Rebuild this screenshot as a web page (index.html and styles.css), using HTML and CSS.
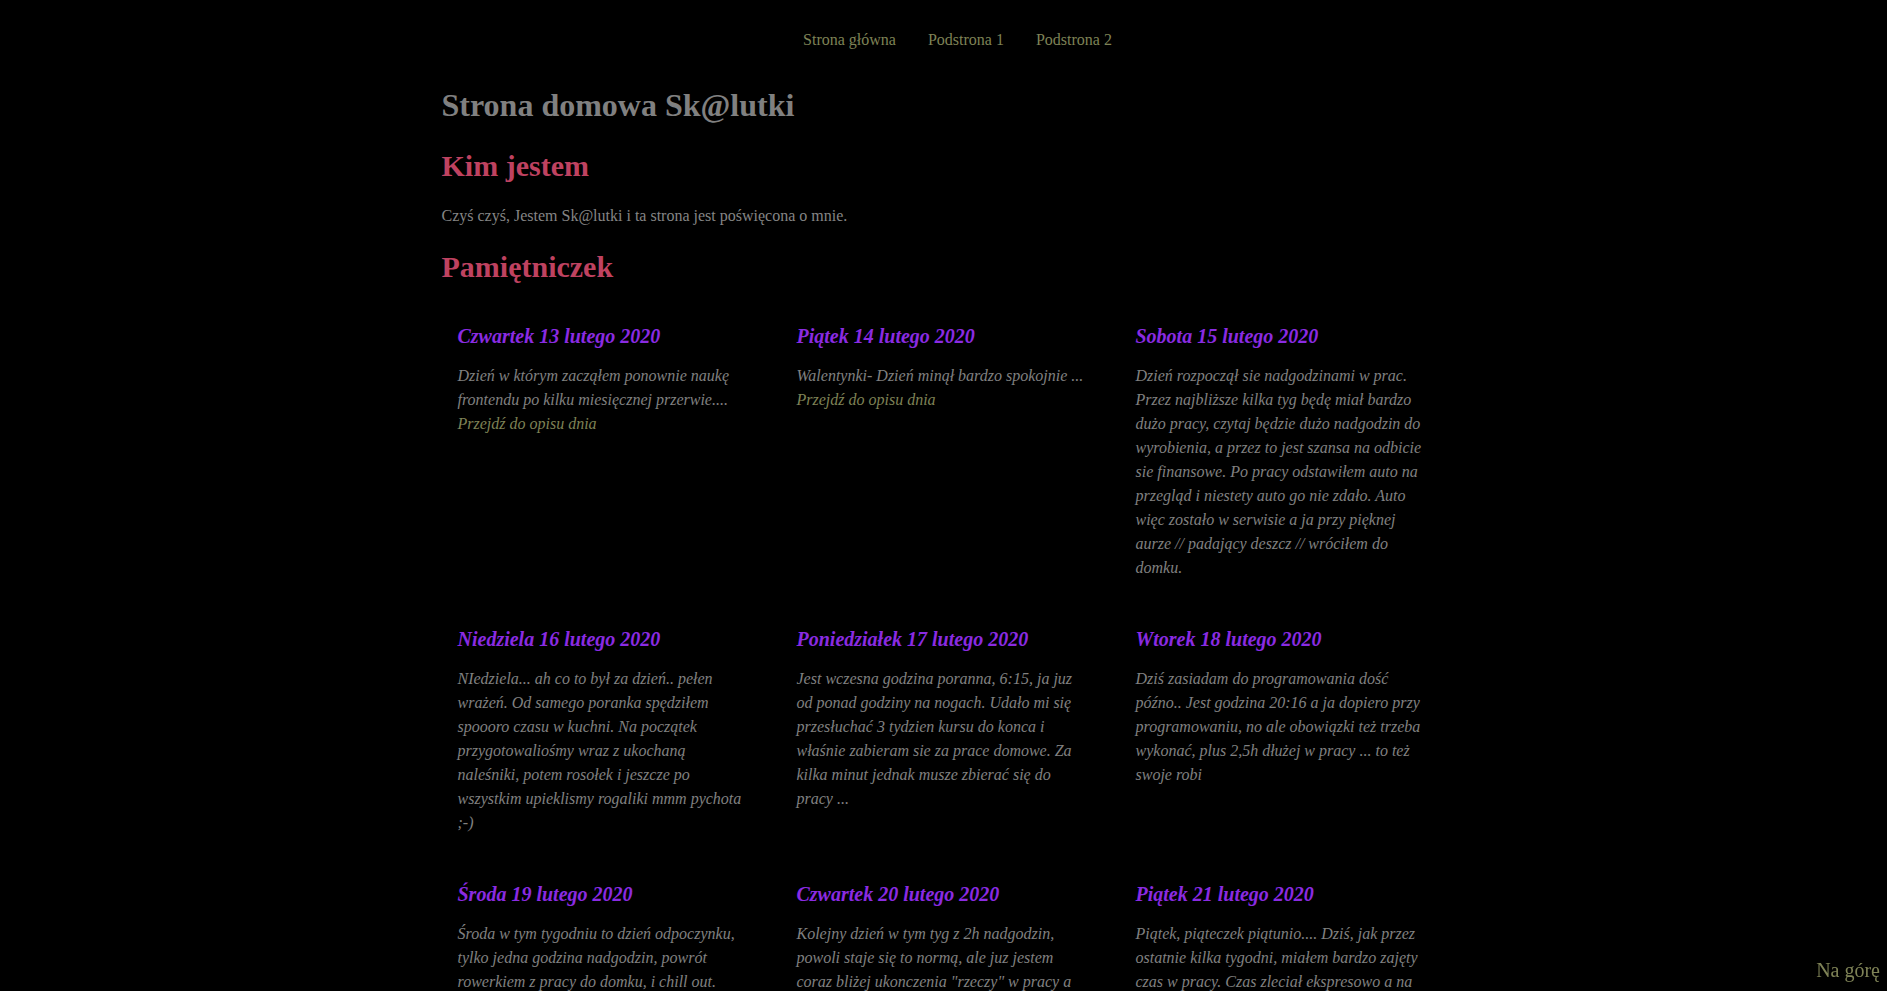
FILE: index.html
```html
<!DOCTYPE html>
<html lang="pl">
<head>
<meta charset="utf-8">
<title>Strona domowa Sk@lutki</title>
<link rel="stylesheet" href="styles.css">
</head>
<body>
<nav class="nav">
  <a class="nav-link" href="#">Strona główna</a>
  <a class="nav-link" href="#">Podstrona 1</a>
  <a class="nav-link" href="#">Podstrona 2</a>
</nav>
<main class="container">
  <h1 class="title">Strona domowa Sk@lutki</h1>
  <h2 class="section">Kim jestem</h2>
  <p class="intro">Czyś czyś, Jestem Sk@lutki i ta strona jest poświęcona o mnie.</p>
  <h2 class="section section-diary">Pamiętniczek</h2>
  <div class="diary">
    <article class="entry">
      <h3 class="entry-title">Czwartek 13 lutego 2020</h3>
      <p class="entry-text">Dzień w którym zacząłem ponownie naukę frontendu po kilku miesięcznej przerwie....</p>
      <a class="entry-link" href="#">Przejdź do opisu dnia</a>
    </article>
    <article class="entry">
      <h3 class="entry-title">Piątek 14 lutego 2020</h3>
      <p class="entry-text">Walentynki- Dzień minął bardzo spokojnie ...</p>
      <a class="entry-link" href="#">Przejdź do opisu dnia</a>
    </article>
    <article class="entry">
      <h3 class="entry-title">Sobota 15 lutego 2020</h3>
      <p class="entry-text">Dzień rozpoczął sie nadgodzinami w prac. Przez najbliższe kilka tyg będę miał bardzo dużo pracy, czytaj będzie dużo nadgodzin do wyrobienia, a przez to jest szansa na odbicie sie finansowe. Po pracy odstawiłem auto na przegląd i niestety auto go nie zdało. Auto więc zostało w serwisie a ja przy pięknej aurze // padający deszcz // wróciłem do domku.</p>
    </article>
    <article class="entry">
      <h3 class="entry-title">Niedziela 16 lutego 2020</h3>
      <p class="entry-text">NIedziela... ah co to był za dzień.. pełen wrażeń. Od samego poranka spędziłem spoooro czasu w kuchni. Na początek przygotowaliośmy wraz z ukochaną naleśniki, potem rosołek i jeszcze po wszystkim upieklismy rogaliki mmm pychota ;-)</p>
    </article>
    <article class="entry">
      <h3 class="entry-title">Poniedziałek 17 lutego 2020</h3>
      <p class="entry-text">Jest wczesna godzina poranna, 6:15, ja juz od ponad godziny na nogach. Udało mi się przesłuchać 3 tydzien kursu do konca i właśnie zabieram sie za prace domowe. Za kilka minut jednak musze zbierać się do pracy ...</p>
    </article>
    <article class="entry">
      <h3 class="entry-title">Wtorek 18 lutego 2020</h3>
      <p class="entry-text">Dziś zasiadam do programowania dość późno.. Jest godzina 20:16 a ja dopiero przy programowaniu, no ale obowiązki też trzeba wykonać, plus 2,5h dłużej w pracy ... to też swoje robi</p>
    </article>
    <article class="entry">
      <h3 class="entry-title">Środa 19 lutego 2020</h3>
      <p class="entry-text">Środa w tym tygodniu to dzień odpoczynku, tylko jedna godzina nadgodzin, powrót rowerkiem z pracy do domku, i chill out.</p>
    </article>
    <article class="entry">
      <h3 class="entry-title">Czwartek 20 lutego 2020</h3>
      <p class="entry-text">Kolejny dzień w tym tyg z 2h nadgodzin, powoli staje się to normą, ale juz jestem coraz bliżej ukonczenia "rzeczy" w pracy a potem będzie trochę więcej czasu na naukę ...</p>
    </article>
    <article class="entry">
      <h3 class="entry-title">Piątek 21 lutego 2020</h3>
      <p class="entry-text">Piątek, piąteczek piątunio.... Dziś, jak przez ostatnie kilka tygodni, miałem bardzo zajęty czas w pracy. Czas zleciał ekspresowo a na koniec dnia jeszcze trochę nauki ...</p>
    </article>
  </div>
</main>
<a class="to-top" href="#">Na górę</a>
</body>
</html>
```

FILE: styles.css
```css
html, body {
  margin: 0;
  padding: 0;
  background: #000;
}

body {
  font-family: "Liberation Serif", "Times New Roman", serif;
  color: #808080;
  font-size: 16px;
}

.nav {
  display: flex;
  justify-content: center;
  gap: 32px;
  padding: 30px 0 0 28px;
  line-height: 20px;
  height: 20px;
}

.nav-link {
  color: #7e8256;
  text-decoration: none;
  font-size: 16px;
}

.container {
  width: 1004px;
  margin: 0 auto;
  padding-bottom: 60px;
}

.title {
  margin: 37px 0 0;
  font-size: 32px;
  line-height: 37px;
  font-weight: bold;
  color: #808080;
}

.section {
  margin: 25px 0 0;
  font-size: 30px;
  line-height: 34px;
  font-weight: bold;
  color: #bf4260;
}

.intro {
  margin: 21px 0 0;
  line-height: 24px;
  color: #858585;
}

.section-diary {
  margin-top: 22px;
}

.diary {
  display: grid;
  grid-template-columns: repeat(3, 318px);
  column-gap: 21px;
  row-gap: 47px;
  margin-top: 40px;
}

.entry {
  padding: 0 14px 0 16px;
  font-style: italic;
}

.entry-title {
  margin: 0 0 16px;
  font-size: 20px;
  line-height: 24px;
  font-weight: bold;
  color: #8a2be2;
}

.entry-text {
  margin: 0;
  line-height: 24px;
  color: #808080;
}

.entry-link {
  display: block;
  line-height: 24px;
  color: #7e8256;
  text-decoration: none;
}

.to-top {
  position: fixed;
  right: 7px;
  bottom: 9px;
  font-size: 20px;
  line-height: 24px;
  color: #7e8256;
  text-decoration: none;
}
```
